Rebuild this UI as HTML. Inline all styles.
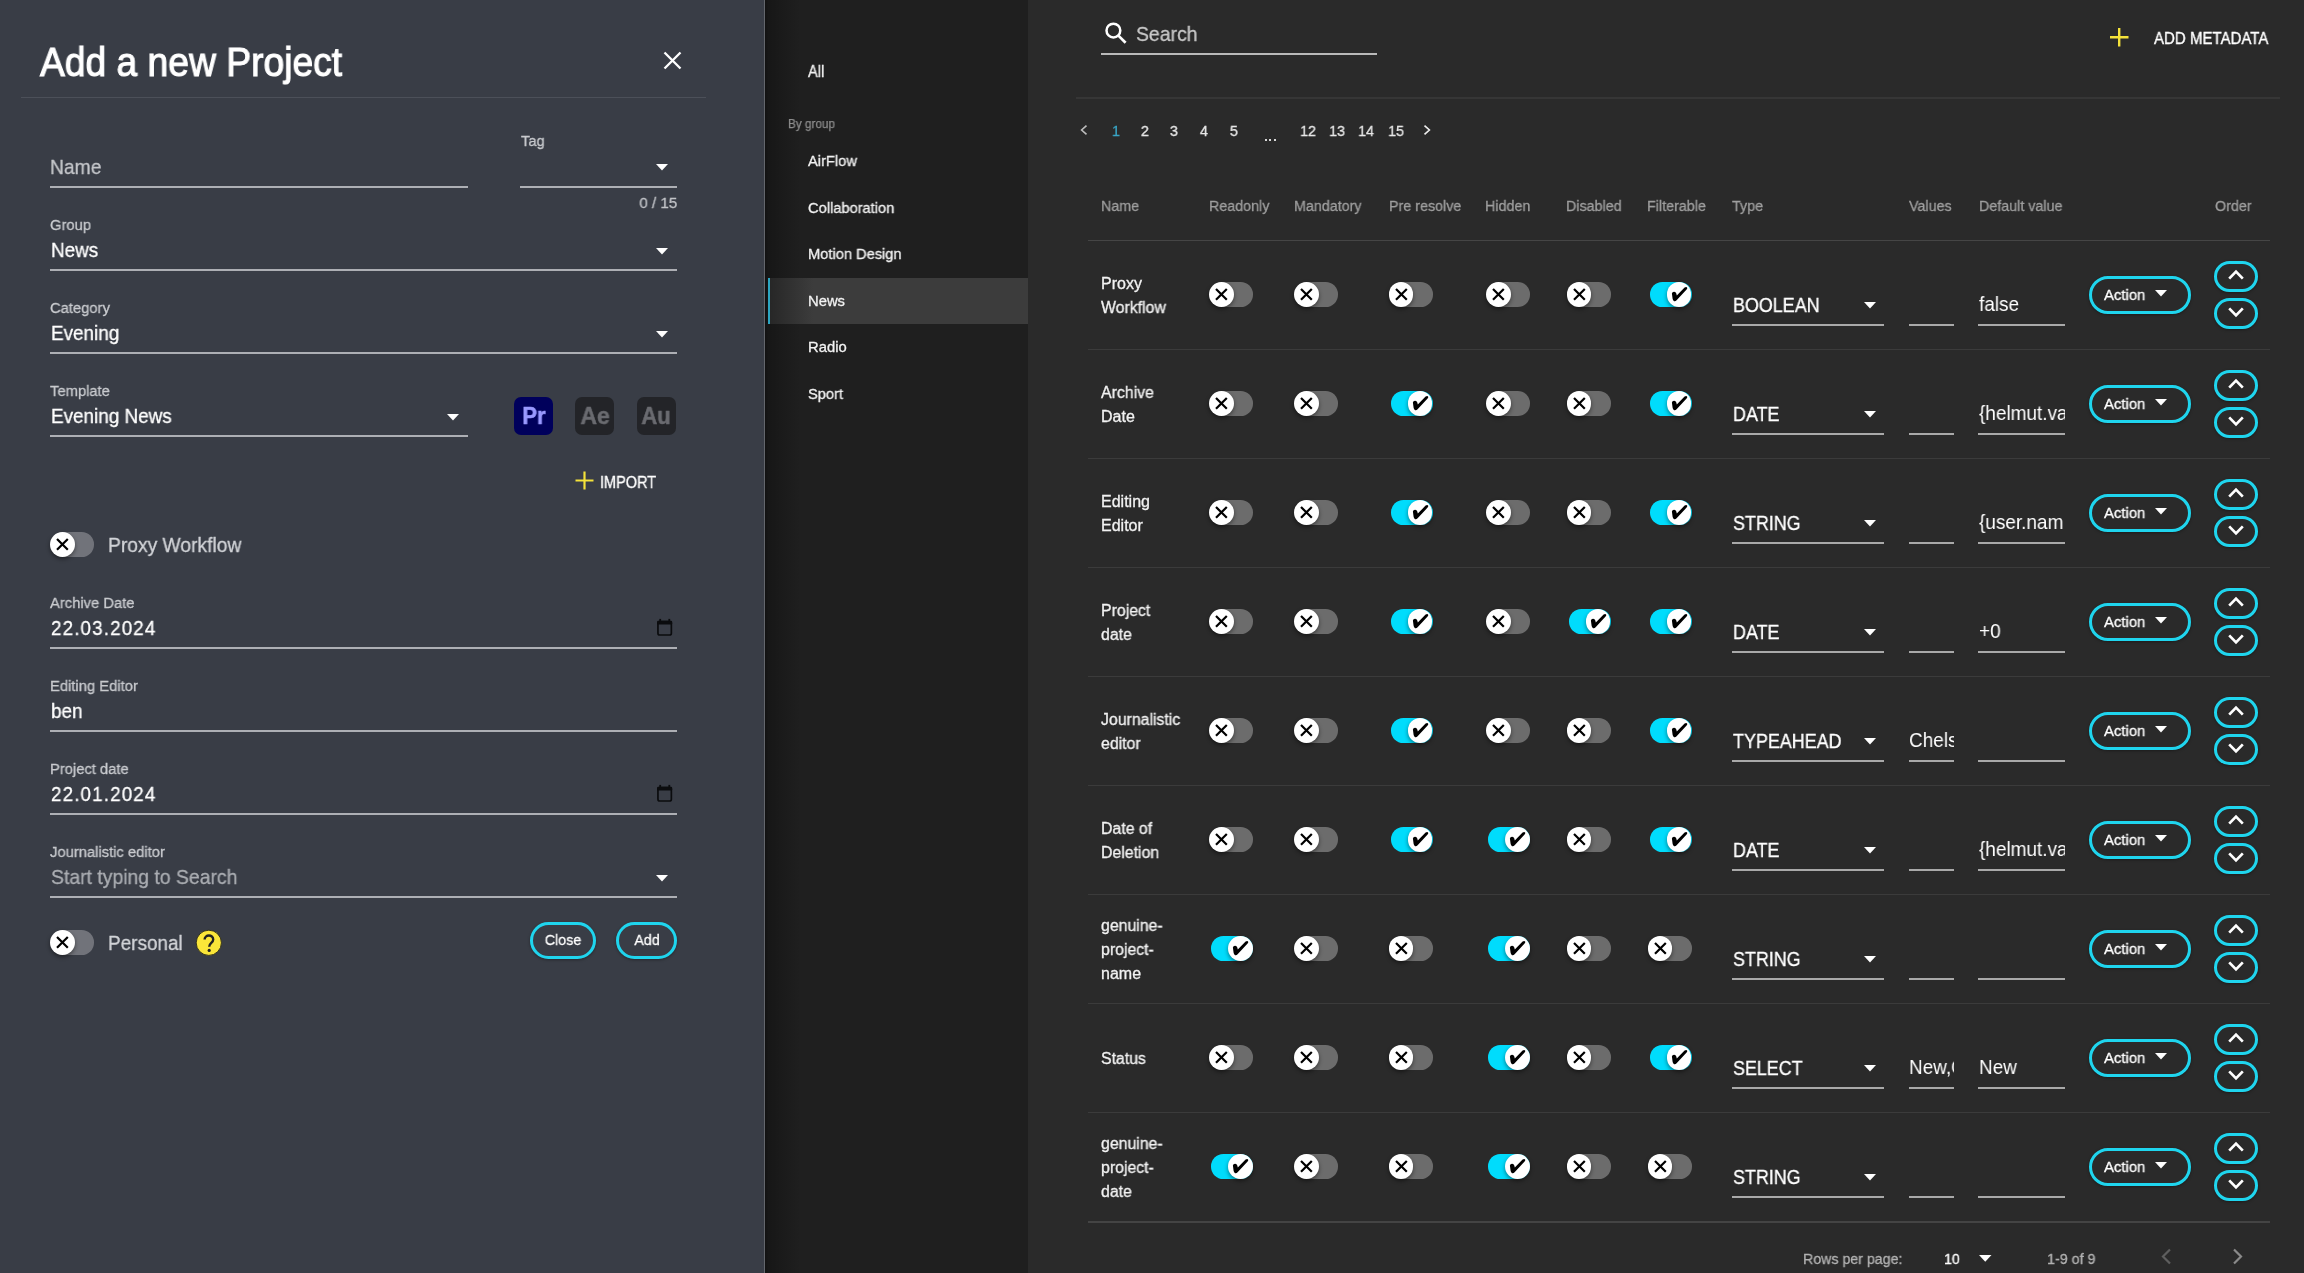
<!DOCTYPE html>
<html><head><meta charset="utf-8"><title>Add a new Project</title>
<style>
html,body{margin:0;padding:0;}
body{width:2304px;height:1273px;overflow:hidden;position:relative;background:#2a2a2a;font-family:"Liberation Sans",sans-serif;}
.t{position:absolute;white-space:nowrap;will-change:transform;}
.r{position:absolute;}
.s{position:absolute;overflow:visible;}
</style></head><body>
<div class="r" style="left:0px;top:0px;width:764px;height:1273px;background:#393d46;"></div>
<div class="r" style="left:764px;top:0px;width:1px;height:1273px;background:#63666c;"></div>
<div class="r" style="left:765px;top:0px;width:263px;height:1273px;background:#1f1f1f;"></div>
<div class="r" style="left:765px;top:0px;width:40px;height:1273px;background:linear-gradient(90deg, rgba(0,0,0,.45) 0px, rgba(0,0,0,.28) 3px, rgba(0,0,0,.14) 18px, rgba(0,0,0,0) 36px);"></div>
<div class="r" style="left:1028px;top:0px;width:1276px;height:1273px;background:#2a2a2a;"></div>
<div class="t" style="left:40.00px;top:37.97px;font-size:40.50px;line-height:48.6px;color:#ffffff;transform:scaleX(0.9189);transform-origin:left center;-webkit-text-stroke:1.1px #fff;">Add a new Project</div>
<svg class="s" style="left:660px;top:48px;" width="25" height="25" viewBox="0 0 25 25"><path d="M4.5 4.5 L20.5 20.5 M20.5 4.5 L4.5 20.5" stroke="#fff" stroke-width="2.3" stroke-linecap="butt"/></svg>
<div class="r" style="left:21px;top:97px;width:685px;height:1px;background:#4c5059;"></div>
<div class="t" style="left:50.30px;top:154.51px;font-size:20.80px;line-height:24.96px;color:#c4c6ca;transform:scaleX(0.9273);transform-origin:left center;-webkit-text-stroke:0.3px #c4c6ca;">Name</div>
<div class="r" style="left:50px;top:186px;width:418px;height:2px;background:#adafb4;"></div>
<div class="t" style="left:520.90px;top:132.89px;font-size:14.80px;line-height:17.76px;color:#c9cbcf;transform:scaleX(0.9862);transform-origin:left center;-webkit-text-stroke:0.3px #c9cbcf;">Tag</div>
<svg class="s" style="left:655px;top:163px;" width="14" height="8.5" viewBox="0 0 14 8.5"><path d="M1 1 L13 1 L7.0 7.5 Z" fill="#fff"/></svg>
<div class="r" style="left:520px;top:186px;width:157px;height:2px;background:#adafb4;"></div>
<div class="t" style="right:1627.00px;top:193.72px;font-size:15.30px;line-height:18.36px;color:#c2c4c8;transform:scaleX(0.9908);transform-origin:right center;-webkit-text-stroke:0.3px #c2c4c8;">0 / 15</div>
<div class="t" style="left:50.30px;top:216.02px;font-size:15.30px;line-height:18.36px;color:#c9cbcf;transform:scaleX(0.965);transform-origin:left center;-webkit-text-stroke:0.3px #c9cbcf;">Group</div>
<div class="t" style="left:51.00px;top:239.06px;font-size:19.80px;line-height:23.76px;color:#ffffff;transform:scaleX(0.955);transform-origin:left center;-webkit-text-stroke:0.3px #ffffff;">News</div>
<svg class="s" style="left:655px;top:246.5px;" width="14" height="8.5" viewBox="0 0 14 8.5"><path d="M1 1 L13 1 L7.0 7.5 Z" fill="#fff"/></svg>
<div class="r" style="left:50px;top:269px;width:627px;height:2px;background:#adafb4;"></div>
<div class="t" style="left:50.30px;top:299.02px;font-size:15.30px;line-height:18.36px;color:#c9cbcf;transform:scaleX(0.965);transform-origin:left center;-webkit-text-stroke:0.3px #c9cbcf;">Category</div>
<div class="t" style="left:51.00px;top:322.06px;font-size:19.80px;line-height:23.76px;color:#ffffff;transform:scaleX(0.955);transform-origin:left center;-webkit-text-stroke:0.3px #ffffff;">Evening</div>
<svg class="s" style="left:655px;top:329.5px;" width="14" height="8.5" viewBox="0 0 14 8.5"><path d="M1 1 L13 1 L7.0 7.5 Z" fill="#fff"/></svg>
<div class="r" style="left:50px;top:352px;width:627px;height:2px;background:#adafb4;"></div>
<div class="t" style="left:50.30px;top:382.02px;font-size:15.30px;line-height:18.36px;color:#c9cbcf;transform:scaleX(0.965);transform-origin:left center;-webkit-text-stroke:0.3px #c9cbcf;">Template</div>
<div class="t" style="left:51.00px;top:405.06px;font-size:19.80px;line-height:23.76px;color:#ffffff;transform:scaleX(0.955);transform-origin:left center;-webkit-text-stroke:0.3px #ffffff;">Evening News</div>
<svg class="s" style="left:446px;top:412.5px;" width="14" height="8.5" viewBox="0 0 14 8.5"><path d="M1 1 L13 1 L7.0 7.5 Z" fill="#fff"/></svg>
<div class="r" style="left:50px;top:435px;width:418px;height:2px;background:#adafb4;"></div>
<div class="r" style="left:514px;top:397px;width:39px;height:38px;border-radius:7px;background:#00005b;"></div>
<div class="t" style="left:333.50px;width:400px;text-align:center;top:401.88px;font-size:24.00px;line-height:28.8px;color:#9999ff;font-weight:700;transform:scaleX(0.9163);transform-origin:center center;-webkit-text-stroke:0.5px #9999ff;">Pr</div>
<div class="r" style="left:575px;top:397px;width:39px;height:38px;border-radius:7px;background:#232428;"></div>
<div class="t" style="left:394.50px;width:400px;text-align:center;top:401.88px;font-size:24.00px;line-height:28.8px;color:#6a6b70;font-weight:700;transform:scaleX(0.957);transform-origin:center center;-webkit-text-stroke:0.5px #6a6b70;">Ae</div>
<div class="r" style="left:636.5px;top:397px;width:39px;height:38px;border-radius:7px;background:#232428;"></div>
<div class="t" style="left:456.00px;width:400px;text-align:center;top:401.88px;font-size:24.00px;line-height:28.8px;color:#6a6b70;font-weight:700;transform:scaleX(0.9176);transform-origin:center center;-webkit-text-stroke:0.5px #6a6b70;">Au</div>
<svg class="s" style="left:575px;top:471px;" width="19" height="19" viewBox="0 0 19 19"><path d="M9.5 0.5 V18.5 M0.5 9.5 H18.5" stroke="#f4e23a" stroke-width="2.2"/></svg>
<div class="t" style="left:600.40px;top:473.49px;font-size:16.60px;line-height:19.92px;color:#ffffff;transform:scaleX(0.8733);transform-origin:left center;-webkit-text-stroke:0.3px #ffffff;">IMPORT</div>
<div class="r" style="left:51px;top:532.3000000000001px;width:43px;height:24.6px;border-radius:12.3px;background:#71737a;"></div>
<div class="r" style="left:50px;top:532.2px;width:24.8px;height:24.8px;border-radius:50%;background:#fff;box-shadow:0 2px 4px rgba(0,0,0,.45);"></div>
<svg class="s" style="left:50px;top:532.2px;" width="25" height="25" viewBox="0 0 25 25"><path d="M7.0 7.0 L17.8 17.8 M17.8 7.0 L7.0 17.8" stroke="#000" stroke-width="2.2"/></svg>
<div class="t" style="left:107.60px;top:532.70px;font-size:20.50px;line-height:24.6px;color:#d2d4d8;transform:scaleX(0.939);transform-origin:left center;-webkit-text-stroke:0.3px #d2d4d8;">Proxy Workflow</div>
<div class="t" style="left:50.30px;top:594.02px;font-size:15.30px;line-height:18.36px;color:#c9cbcf;transform:scaleX(0.965);transform-origin:left center;-webkit-text-stroke:0.3px #c9cbcf;">Archive Date</div>
<div class="t" style="left:51.00px;top:617.06px;font-size:19.80px;line-height:23.76px;color:#ffffff;letter-spacing:1.2px;transform:scaleX(0.95);transform-origin:left center;-webkit-text-stroke:0.3px #ffffff;">22.03.2024</div>
<svg class="s" style="left:656px;top:618px;" width="18" height="19" viewBox="0 0 18 19"><rect x="1.95" y="3.5" width="13.4" height="13.5" rx="1.8" fill="none" stroke="#0b0c0e" stroke-width="1.7"/><rect x="1.1" y="2.7" width="15.1" height="3.8" rx="1.2" fill="#0b0c0e"/><rect x="3.3" y="0.9" width="1.8" height="2.6" fill="#0b0c0e"/><rect x="12.4" y="0.9" width="1.8" height="2.6" fill="#0b0c0e"/></svg>
<div class="r" style="left:50px;top:647px;width:627px;height:2px;background:#adafb4;"></div>
<div class="t" style="left:50.30px;top:677.02px;font-size:15.30px;line-height:18.36px;color:#c9cbcf;transform:scaleX(0.965);transform-origin:left center;-webkit-text-stroke:0.3px #c9cbcf;">Editing Editor</div>
<div class="t" style="left:51.00px;top:700.06px;font-size:19.80px;line-height:23.76px;color:#ffffff;transform:scaleX(0.955);transform-origin:left center;-webkit-text-stroke:0.3px #ffffff;">ben</div>
<div class="r" style="left:50px;top:730px;width:627px;height:2px;background:#adafb4;"></div>
<div class="t" style="left:50.30px;top:760.02px;font-size:15.30px;line-height:18.36px;color:#c9cbcf;transform:scaleX(0.965);transform-origin:left center;-webkit-text-stroke:0.3px #c9cbcf;">Project date</div>
<div class="t" style="left:51.00px;top:783.06px;font-size:19.80px;line-height:23.76px;color:#ffffff;letter-spacing:1.2px;transform:scaleX(0.95);transform-origin:left center;-webkit-text-stroke:0.3px #ffffff;">22.01.2024</div>
<svg class="s" style="left:656px;top:784px;" width="18" height="19" viewBox="0 0 18 19"><rect x="1.95" y="3.5" width="13.4" height="13.5" rx="1.8" fill="none" stroke="#0b0c0e" stroke-width="1.7"/><rect x="1.1" y="2.7" width="15.1" height="3.8" rx="1.2" fill="#0b0c0e"/><rect x="3.3" y="0.9" width="1.8" height="2.6" fill="#0b0c0e"/><rect x="12.4" y="0.9" width="1.8" height="2.6" fill="#0b0c0e"/></svg>
<div class="r" style="left:50px;top:813px;width:627px;height:2px;background:#adafb4;"></div>
<div class="t" style="left:50.30px;top:843.02px;font-size:15.30px;line-height:18.36px;color:#c9cbcf;transform:scaleX(0.965);transform-origin:left center;-webkit-text-stroke:0.3px #c9cbcf;">Journalistic editor</div>
<div class="t" style="left:51.00px;top:866.06px;font-size:19.80px;line-height:23.76px;color:#abaeb3;transform:scaleX(0.98);transform-origin:left center;-webkit-text-stroke:0.3px #abaeb3;">Start typing to Search</div>
<svg class="s" style="left:655px;top:873.5px;" width="14" height="8.5" viewBox="0 0 14 8.5"><path d="M1 1 L13 1 L7.0 7.5 Z" fill="#fff"/></svg>
<div class="r" style="left:50px;top:896px;width:627px;height:2px;background:#adafb4;"></div>
<div class="r" style="left:51px;top:930.2px;width:43px;height:24.6px;border-radius:12.3px;background:#71737a;"></div>
<div class="r" style="left:50px;top:930.1px;width:24.8px;height:24.8px;border-radius:50%;background:#fff;box-shadow:0 2px 4px rgba(0,0,0,.45);"></div>
<svg class="s" style="left:50px;top:930.1px;" width="25" height="25" viewBox="0 0 25 25"><path d="M7.0 7.0 L17.8 17.8 M17.8 7.0 L7.0 17.8" stroke="#000" stroke-width="2.2"/></svg>
<div class="t" style="left:107.70px;top:930.90px;font-size:20.50px;line-height:24.6px;color:#d2d4d8;transform:scaleX(0.9237);transform-origin:left center;-webkit-text-stroke:0.3px #d2d4d8;">Personal</div>
<svg class="s" style="left:195px;top:928.5px;" width="28" height="28" viewBox="0 0 28 28"><circle cx="13.8" cy="13.8" r="12.6" fill="#fbe639" stroke="#2a2a1a" stroke-width="0.9"/><path d="M9.6 10.6 C9.6 5.2 18.2 5.2 18.2 10.4 C18.2 14.0 14.2 13.8 14.2 17.8" fill="none" stroke="#222" stroke-width="2.4"/><circle cx="14.2" cy="21.4" r="1.6" fill="#222"/></svg>
<div class="r" style="left:530px;top:921.5px;width:66px;height:37.5px;border-radius:18.75px;border:3px solid #1fd5ee;box-sizing:border-box;box-shadow:0 1px 3px rgba(0,0,0,.35);"></div>
<div class="t" style="left:363.00px;width:400px;text-align:center;top:931.03px;font-size:15.50px;line-height:18.6px;color:#ffffff;transform:scaleX(0.92);transform-origin:center center;-webkit-text-stroke:0.3px #ffffff;">Close</div>
<div class="r" style="left:616px;top:921.5px;width:61px;height:37.5px;border-radius:18.75px;border:3px solid #1fd5ee;box-sizing:border-box;box-shadow:0 1px 3px rgba(0,0,0,.35);"></div>
<div class="t" style="left:446.50px;width:400px;text-align:center;top:931.03px;font-size:15.50px;line-height:18.6px;color:#ffffff;transform:scaleX(0.92);transform-origin:center center;-webkit-text-stroke:0.3px #ffffff;">Add</div>
<div class="t" style="left:808.10px;top:63.04px;font-size:15.70px;line-height:18.84px;color:#f0f0f0;transform:scaleX(0.9353);transform-origin:left center;-webkit-text-stroke:0.3px #f0f0f0;">All</div>
<div class="t" style="left:787.70px;top:116.97px;font-size:12.60px;line-height:15.12px;color:#8e8e8e;transform:scaleX(0.9294);transform-origin:left center;-webkit-text-stroke:0.25px #8e8e8e;">By group</div>
<div class="t" style="left:808.10px;top:153.19px;font-size:14.80px;line-height:17.76px;color:#f2f2f2;transform:scaleX(0.99);transform-origin:left center;-webkit-text-stroke:0.3px #f2f2f2;">AirFlow</div>
<div class="t" style="left:808.10px;top:199.69px;font-size:14.80px;line-height:17.76px;color:#f2f2f2;transform:scaleX(0.99);transform-origin:left center;-webkit-text-stroke:0.3px #f2f2f2;">Collaboration</div>
<div class="t" style="left:808.10px;top:246.19px;font-size:14.80px;line-height:17.76px;color:#f2f2f2;transform:scaleX(0.99);transform-origin:left center;-webkit-text-stroke:0.3px #f2f2f2;">Motion Design</div>
<div class="r" style="left:768px;top:278px;width:260px;height:46px;background:linear-gradient(90deg,#262626 0px,#3c3c3c 45px,#3c3c3c 100%);"></div>
<div class="r" style="left:767.8px;top:278px;width:2.6px;height:46px;background:#2ca6c2;"></div>
<div class="t" style="left:808.10px;top:292.69px;font-size:14.80px;line-height:17.76px;color:#f2f2f2;transform:scaleX(0.99);transform-origin:left center;-webkit-text-stroke:0.3px #f2f2f2;">News</div>
<div class="t" style="left:808.10px;top:339.19px;font-size:14.80px;line-height:17.76px;color:#f2f2f2;transform:scaleX(0.99);transform-origin:left center;-webkit-text-stroke:0.3px #f2f2f2;">Radio</div>
<div class="t" style="left:808.10px;top:385.69px;font-size:14.80px;line-height:17.76px;color:#f2f2f2;transform:scaleX(0.99);transform-origin:left center;-webkit-text-stroke:0.3px #f2f2f2;">Sport</div>
<svg class="s" style="left:1103px;top:20px;" width="26" height="26" viewBox="0 0 26 26"><circle cx="10.4" cy="10.6" r="6.9" fill="none" stroke="#fff" stroke-width="2.5"/><path d="M15.4 15.6 L22.6 22.8" stroke="#fff" stroke-width="2.7"/></svg>
<div class="t" style="left:1135.80px;top:21.71px;font-size:20.80px;line-height:24.96px;color:#c8c8c8;transform:scaleX(0.9342);transform-origin:left center;-webkit-text-stroke:0.3px #c8c8c8;">Search</div>
<div class="r" style="left:1101px;top:53px;width:276px;height:2px;background:#b9b9b9;"></div>
<svg class="s" style="left:2109px;top:27px;" width="21" height="21" viewBox="0 0 21 21"><path d="M10.2 1 V19.5 M1 10.2 H19.5" stroke="#f4e23a" stroke-width="2.4"/></svg>
<div class="t" style="left:2154.00px;top:28.99px;font-size:16.60px;line-height:19.92px;color:#ffffff;transform:scaleX(0.9058);transform-origin:left center;-webkit-text-stroke:0.35px #fff;">ADD METADATA</div>
<div class="r" style="left:1076px;top:97px;width:1204px;height:1.8px;background:#363636;"></div>
<svg class="s" style="left:1077px;top:123px;" width="14" height="14" viewBox="0 0 14 14"><path d="M9.5 2.6 L4.6 7 L9.5 11.4" fill="none" stroke="#bdbdbd" stroke-width="1.6"/></svg>
<div class="t" style="left:915.60px;width:400px;text-align:center;top:121.60px;font-size:15.00px;line-height:18.0px;color:#3aa6c6;transform:scaleX(0.95);transform-origin:center center;-webkit-text-stroke:0.3px #3aa6c6;">1</div>
<div class="t" style="left:945.00px;width:400px;text-align:center;top:121.60px;font-size:15.00px;line-height:18.0px;color:#e8e8e8;transform:scaleX(0.95);transform-origin:center center;-webkit-text-stroke:0.3px #e8e8e8;">2</div>
<div class="t" style="left:974.20px;width:400px;text-align:center;top:121.60px;font-size:15.00px;line-height:18.0px;color:#e8e8e8;transform:scaleX(0.95);transform-origin:center center;-webkit-text-stroke:0.3px #e8e8e8;">3</div>
<div class="t" style="left:1004.00px;width:400px;text-align:center;top:121.60px;font-size:15.00px;line-height:18.0px;color:#e8e8e8;transform:scaleX(0.95);transform-origin:center center;-webkit-text-stroke:0.3px #e8e8e8;">4</div>
<div class="t" style="left:1033.60px;width:400px;text-align:center;top:121.60px;font-size:15.00px;line-height:18.0px;color:#e8e8e8;transform:scaleX(0.95);transform-origin:center center;-webkit-text-stroke:0.3px #e8e8e8;">5</div>
<div class="t" style="left:1107.50px;width:400px;text-align:center;top:121.60px;font-size:15.00px;line-height:18.0px;color:#e8e8e8;transform:scaleX(0.95);transform-origin:center center;-webkit-text-stroke:0.3px #e8e8e8;">12</div>
<div class="t" style="left:1136.90px;width:400px;text-align:center;top:121.60px;font-size:15.00px;line-height:18.0px;color:#e8e8e8;transform:scaleX(0.95);transform-origin:center center;-webkit-text-stroke:0.3px #e8e8e8;">13</div>
<div class="t" style="left:1166.40px;width:400px;text-align:center;top:121.60px;font-size:15.00px;line-height:18.0px;color:#e8e8e8;transform:scaleX(0.95);transform-origin:center center;-webkit-text-stroke:0.3px #e8e8e8;">14</div>
<div class="t" style="left:1195.70px;width:400px;text-align:center;top:121.60px;font-size:15.00px;line-height:18.0px;color:#e8e8e8;transform:scaleX(0.95);transform-origin:center center;-webkit-text-stroke:0.3px #e8e8e8;">15</div>
<div class="r" style="left:1265.3px;top:139.2px;width:2px;height:2px;background:#d8d8d8;"></div>
<div class="r" style="left:1269.3999999999999px;top:139.2px;width:2px;height:2px;background:#d8d8d8;"></div>
<div class="r" style="left:1273.5px;top:139.2px;width:2px;height:2px;background:#d8d8d8;"></div>
<svg class="s" style="left:1420px;top:123px;" width="14" height="14" viewBox="0 0 14 14"><path d="M4.5 2.6 L9.4 7 L4.5 11.4" fill="none" stroke="#eeeeee" stroke-width="1.6"/></svg>
<div class="t" style="left:1100.50px;top:196.92px;font-size:15.30px;line-height:18.36px;color:#9f9f9f;transform:scaleX(0.935);transform-origin:left center;-webkit-text-stroke:0.3px #9f9f9f;">Name</div>
<div class="t" style="left:1209.40px;top:196.92px;font-size:15.30px;line-height:18.36px;color:#9f9f9f;transform:scaleX(0.935);transform-origin:left center;-webkit-text-stroke:0.3px #9f9f9f;">Readonly</div>
<div class="t" style="left:1293.90px;top:196.92px;font-size:15.30px;line-height:18.36px;color:#9f9f9f;transform:scaleX(0.935);transform-origin:left center;-webkit-text-stroke:0.3px #9f9f9f;">Mandatory</div>
<div class="t" style="left:1389.00px;top:196.92px;font-size:15.30px;line-height:18.36px;color:#9f9f9f;transform:scaleX(0.935);transform-origin:left center;-webkit-text-stroke:0.3px #9f9f9f;">Pre resolve</div>
<div class="t" style="left:1485.30px;top:196.92px;font-size:15.30px;line-height:18.36px;color:#9f9f9f;transform:scaleX(0.935);transform-origin:left center;-webkit-text-stroke:0.3px #9f9f9f;">Hidden</div>
<div class="t" style="left:1566.20px;top:196.92px;font-size:15.30px;line-height:18.36px;color:#9f9f9f;transform:scaleX(0.935);transform-origin:left center;-webkit-text-stroke:0.3px #9f9f9f;">Disabled</div>
<div class="t" style="left:1647.30px;top:196.92px;font-size:15.30px;line-height:18.36px;color:#9f9f9f;transform:scaleX(0.935);transform-origin:left center;-webkit-text-stroke:0.3px #9f9f9f;">Filterable</div>
<div class="t" style="left:1732.00px;top:196.92px;font-size:15.30px;line-height:18.36px;color:#9f9f9f;transform:scaleX(0.935);transform-origin:left center;-webkit-text-stroke:0.3px #9f9f9f;">Type</div>
<div class="t" style="left:1908.50px;top:196.92px;font-size:15.30px;line-height:18.36px;color:#9f9f9f;transform:scaleX(0.935);transform-origin:left center;-webkit-text-stroke:0.3px #9f9f9f;">Values</div>
<div class="t" style="left:1979.00px;top:196.92px;font-size:15.30px;line-height:18.36px;color:#9f9f9f;transform:scaleX(0.935);transform-origin:left center;-webkit-text-stroke:0.3px #9f9f9f;">Default value</div>
<div class="t" style="left:2215.00px;top:196.92px;font-size:15.30px;line-height:18.36px;color:#9f9f9f;transform:scaleX(0.935);transform-origin:left center;-webkit-text-stroke:0.3px #9f9f9f;">Order</div>
<div class="r" style="left:1088px;top:240px;width:1182px;height:1.4px;background:#454545;"></div>
<div class="r" style="left:1088px;top:349.2px;width:1182px;height:1.3px;background:#3b3b3b;"></div>
<div class="r" style="left:1088px;top:458.2px;width:1182px;height:1.3px;background:#3b3b3b;"></div>
<div class="r" style="left:1088px;top:567.2px;width:1182px;height:1.3px;background:#3b3b3b;"></div>
<div class="r" style="left:1088px;top:676.2px;width:1182px;height:1.3px;background:#3b3b3b;"></div>
<div class="r" style="left:1088px;top:785.2px;width:1182px;height:1.3px;background:#3b3b3b;"></div>
<div class="r" style="left:1088px;top:894.2px;width:1182px;height:1.3px;background:#3b3b3b;"></div>
<div class="r" style="left:1088px;top:1003.2px;width:1182px;height:1.3px;background:#3b3b3b;"></div>
<div class="r" style="left:1088px;top:1112.2px;width:1182px;height:1.3px;background:#3b3b3b;"></div>
<div class="r" style="left:1088px;top:1220.8px;width:1182px;height:2px;background:#444444;"></div>
<div class="t" style="left:1101.30px;top:274.16px;font-size:16.00px;line-height:19.2px;color:#f2f2f2;transform:scaleX(0.99);transform-origin:left center;-webkit-text-stroke:0.3px #f2f2f2;">Proxy</div>
<div class="t" style="left:1101.30px;top:298.16px;font-size:16.00px;line-height:19.2px;color:#f2f2f2;transform:scaleX(0.99);transform-origin:left center;-webkit-text-stroke:0.3px #f2f2f2;">Workflow</div>
<div class="r" style="left:1210px;top:282.2px;width:43px;height:24.6px;border-radius:12.3px;background:#6c6c6c;"></div>
<div class="r" style="left:1209px;top:282.1px;width:24.8px;height:24.8px;border-radius:50%;background:#fff;box-shadow:0 2px 4px rgba(0,0,0,.45);"></div>
<svg class="s" style="left:1209px;top:282.1px;" width="25" height="25" viewBox="0 0 25 25"><path d="M7.0 7.0 L17.8 17.8 M17.8 7.0 L7.0 17.8" stroke="#000" stroke-width="2.2"/></svg>
<div class="r" style="left:1295px;top:282.2px;width:43px;height:24.6px;border-radius:12.3px;background:#6c6c6c;"></div>
<div class="r" style="left:1294px;top:282.1px;width:24.8px;height:24.8px;border-radius:50%;background:#fff;box-shadow:0 2px 4px rgba(0,0,0,.45);"></div>
<svg class="s" style="left:1294px;top:282.1px;" width="25" height="25" viewBox="0 0 25 25"><path d="M7.0 7.0 L17.8 17.8 M17.8 7.0 L7.0 17.8" stroke="#000" stroke-width="2.2"/></svg>
<div class="r" style="left:1389.5px;top:282.2px;width:43px;height:24.6px;border-radius:12.3px;background:#6c6c6c;"></div>
<div class="r" style="left:1388.5px;top:282.1px;width:24.8px;height:24.8px;border-radius:50%;background:#fff;box-shadow:0 2px 4px rgba(0,0,0,.45);"></div>
<svg class="s" style="left:1388.5px;top:282.1px;" width="25" height="25" viewBox="0 0 25 25"><path d="M7.0 7.0 L17.8 17.8 M17.8 7.0 L7.0 17.8" stroke="#000" stroke-width="2.2"/></svg>
<div class="r" style="left:1487px;top:282.2px;width:43px;height:24.6px;border-radius:12.3px;background:#6c6c6c;"></div>
<div class="r" style="left:1486px;top:282.1px;width:24.8px;height:24.8px;border-radius:50%;background:#fff;box-shadow:0 2px 4px rgba(0,0,0,.45);"></div>
<svg class="s" style="left:1486px;top:282.1px;" width="25" height="25" viewBox="0 0 25 25"><path d="M7.0 7.0 L17.8 17.8 M17.8 7.0 L7.0 17.8" stroke="#000" stroke-width="2.2"/></svg>
<div class="r" style="left:1567.5px;top:282.2px;width:43px;height:24.6px;border-radius:12.3px;background:#6c6c6c;"></div>
<div class="r" style="left:1566.5px;top:282.1px;width:24.8px;height:24.8px;border-radius:50%;background:#fff;box-shadow:0 2px 4px rgba(0,0,0,.45);"></div>
<svg class="s" style="left:1566.5px;top:282.1px;" width="25" height="25" viewBox="0 0 25 25"><path d="M7.0 7.0 L17.8 17.8 M17.8 7.0 L7.0 17.8" stroke="#000" stroke-width="2.2"/></svg>
<div class="r" style="left:1649.5px;top:282.2px;width:42px;height:24.6px;border-radius:12.3px;background:#00dcfc;"></div>
<div class="r" style="left:1666.7px;top:282.1px;width:24.8px;height:24.8px;border-radius:50%;background:#fff;box-shadow:0 2px 4px rgba(0,0,0,.45);"></div>
<svg class="s" style="left:1666.7px;top:282.1px;" width="25" height="25" viewBox="0 0 25 25"><path d="M4.9 11.4 Q5.2 9.6 7.2 9.7 Q8.8 9.9 9.3 11.6 L9.8 13.6 L17.6 5.6 Q19.2 4.3 20.1 5.4 Q20.6 6.4 19.6 7.6 L9.6 18.3 Q8.2 19.6 6.8 18.9 Q5.9 18.3 5.6 16.8 Z" fill="#000"/></svg>
<div class="t" style="left:1732.50px;top:292.89px;font-size:20.30px;line-height:24.36px;color:#ffffff;transform:scaleX(0.883);transform-origin:left center;-webkit-text-stroke:0.3px #ffffff;">BOOLEAN</div>
<svg class="s" style="left:1862.5px;top:300.8px;" width="14" height="8.5" viewBox="0 0 14 8.5"><path d="M1 1 L13 1 L7.0 7.5 Z" fill="#fff"/></svg>
<div class="r" style="left:1732px;top:324.0px;width:152px;height:2px;background:#a9a9a9;"></div>
<div class="r" style="left:1908.5px;top:324.0px;width:45.5px;height:2px;background:#a9a9a9;"></div>
<div class="r" style="left:1978px;top:289.5px;width:87px;height:30px;overflow:hidden;"><div class="t" style="left:1px;top:2.49px;font-size:20.4px;line-height:24.48px;color:#fff;transform:scaleX(0.93);transform-origin:left center;">false</div></div>
<div class="r" style="left:1978px;top:324.0px;width:87px;height:2px;background:#a9a9a9;"></div>
<div class="r" style="left:2089px;top:275.5px;width:101.5px;height:38px;border-radius:19.0px;border:3px solid #1fd5ee;box-sizing:border-box;box-shadow:0 1px 3px rgba(0,0,0,.35);"></div>
<div class="t" style="left:2104.10px;top:286.21px;font-size:15.10px;line-height:18.12px;color:#ffffff;transform:scaleX(0.9862);transform-origin:left center;-webkit-text-stroke:0.3px #ffffff;">Action</div>
<svg class="s" style="left:2154px;top:288.7px;" width="14" height="8.5" viewBox="0 0 14 8.5"><path d="M1 1 L13 1 L7.0 7.5 Z" fill="#fff"/></svg>
<div class="r" style="left:2214px;top:261.0px;width:43.6px;height:31px;border-radius:15.5px;border:3px solid #1fd5ee;box-sizing:border-box;box-shadow:0 1px 3px rgba(0,0,0,.35);"></div>
<div class="r" style="left:2214px;top:298.0px;width:43.6px;height:31px;border-radius:15.5px;border:3px solid #1fd5ee;box-sizing:border-box;box-shadow:0 1px 3px rgba(0,0,0,.35);"></div>
<svg class="s" style="left:2228px;top:268.5px;" width="16" height="11" viewBox="0 0 16 11"><path d="M1.2 9.6 L8 2.6 L14.8 9.6" fill="none" stroke="#fff" stroke-width="2.7"/></svg>
<svg class="s" style="left:2228px;top:307.0px;" width="16" height="11" viewBox="0 0 16 11"><path d="M1.2 1.4 L8 8.4 L14.8 1.4" fill="none" stroke="#fff" stroke-width="2.7"/></svg>
<div class="t" style="left:1101.30px;top:383.16px;font-size:16.00px;line-height:19.2px;color:#f2f2f2;transform:scaleX(0.99);transform-origin:left center;-webkit-text-stroke:0.3px #f2f2f2;">Archive</div>
<div class="t" style="left:1101.30px;top:407.16px;font-size:16.00px;line-height:19.2px;color:#f2f2f2;transform:scaleX(0.99);transform-origin:left center;-webkit-text-stroke:0.3px #f2f2f2;">Date</div>
<div class="r" style="left:1210px;top:391.2px;width:43px;height:24.6px;border-radius:12.3px;background:#6c6c6c;"></div>
<div class="r" style="left:1209px;top:391.1px;width:24.8px;height:24.8px;border-radius:50%;background:#fff;box-shadow:0 2px 4px rgba(0,0,0,.45);"></div>
<svg class="s" style="left:1209px;top:391.1px;" width="25" height="25" viewBox="0 0 25 25"><path d="M7.0 7.0 L17.8 17.8 M17.8 7.0 L7.0 17.8" stroke="#000" stroke-width="2.2"/></svg>
<div class="r" style="left:1295px;top:391.2px;width:43px;height:24.6px;border-radius:12.3px;background:#6c6c6c;"></div>
<div class="r" style="left:1294px;top:391.1px;width:24.8px;height:24.8px;border-radius:50%;background:#fff;box-shadow:0 2px 4px rgba(0,0,0,.45);"></div>
<svg class="s" style="left:1294px;top:391.1px;" width="25" height="25" viewBox="0 0 25 25"><path d="M7.0 7.0 L17.8 17.8 M17.8 7.0 L7.0 17.8" stroke="#000" stroke-width="2.2"/></svg>
<div class="r" style="left:1390.5px;top:391.2px;width:42px;height:24.6px;border-radius:12.3px;background:#00dcfc;"></div>
<div class="r" style="left:1407.7px;top:391.1px;width:24.8px;height:24.8px;border-radius:50%;background:#fff;box-shadow:0 2px 4px rgba(0,0,0,.45);"></div>
<svg class="s" style="left:1407.7px;top:391.1px;" width="25" height="25" viewBox="0 0 25 25"><path d="M4.9 11.4 Q5.2 9.6 7.2 9.7 Q8.8 9.9 9.3 11.6 L9.8 13.6 L17.6 5.6 Q19.2 4.3 20.1 5.4 Q20.6 6.4 19.6 7.6 L9.6 18.3 Q8.2 19.6 6.8 18.9 Q5.9 18.3 5.6 16.8 Z" fill="#000"/></svg>
<div class="r" style="left:1487px;top:391.2px;width:43px;height:24.6px;border-radius:12.3px;background:#6c6c6c;"></div>
<div class="r" style="left:1486px;top:391.1px;width:24.8px;height:24.8px;border-radius:50%;background:#fff;box-shadow:0 2px 4px rgba(0,0,0,.45);"></div>
<svg class="s" style="left:1486px;top:391.1px;" width="25" height="25" viewBox="0 0 25 25"><path d="M7.0 7.0 L17.8 17.8 M17.8 7.0 L7.0 17.8" stroke="#000" stroke-width="2.2"/></svg>
<div class="r" style="left:1567.5px;top:391.2px;width:43px;height:24.6px;border-radius:12.3px;background:#6c6c6c;"></div>
<div class="r" style="left:1566.5px;top:391.1px;width:24.8px;height:24.8px;border-radius:50%;background:#fff;box-shadow:0 2px 4px rgba(0,0,0,.45);"></div>
<svg class="s" style="left:1566.5px;top:391.1px;" width="25" height="25" viewBox="0 0 25 25"><path d="M7.0 7.0 L17.8 17.8 M17.8 7.0 L7.0 17.8" stroke="#000" stroke-width="2.2"/></svg>
<div class="r" style="left:1649.5px;top:391.2px;width:42px;height:24.6px;border-radius:12.3px;background:#00dcfc;"></div>
<div class="r" style="left:1666.7px;top:391.1px;width:24.8px;height:24.8px;border-radius:50%;background:#fff;box-shadow:0 2px 4px rgba(0,0,0,.45);"></div>
<svg class="s" style="left:1666.7px;top:391.1px;" width="25" height="25" viewBox="0 0 25 25"><path d="M4.9 11.4 Q5.2 9.6 7.2 9.7 Q8.8 9.9 9.3 11.6 L9.8 13.6 L17.6 5.6 Q19.2 4.3 20.1 5.4 Q20.6 6.4 19.6 7.6 L9.6 18.3 Q8.2 19.6 6.8 18.9 Q5.9 18.3 5.6 16.8 Z" fill="#000"/></svg>
<div class="t" style="left:1732.50px;top:401.89px;font-size:20.30px;line-height:24.36px;color:#ffffff;transform:scaleX(0.883);transform-origin:left center;-webkit-text-stroke:0.3px #ffffff;">DATE</div>
<svg class="s" style="left:1862.5px;top:409.8px;" width="14" height="8.5" viewBox="0 0 14 8.5"><path d="M1 1 L13 1 L7.0 7.5 Z" fill="#fff"/></svg>
<div class="r" style="left:1732px;top:433.0px;width:152px;height:2px;background:#a9a9a9;"></div>
<div class="r" style="left:1908.5px;top:433.0px;width:45.5px;height:2px;background:#a9a9a9;"></div>
<div class="r" style="left:1978px;top:398.5px;width:87px;height:30px;overflow:hidden;"><div class="t" style="left:1px;top:2.49px;font-size:20.4px;line-height:24.48px;color:#fff;transform:scaleX(0.93);transform-origin:left center;">{helmut.va</div></div>
<div class="r" style="left:1978px;top:433.0px;width:87px;height:2px;background:#a9a9a9;"></div>
<div class="r" style="left:2089px;top:384.5px;width:101.5px;height:38px;border-radius:19.0px;border:3px solid #1fd5ee;box-sizing:border-box;box-shadow:0 1px 3px rgba(0,0,0,.35);"></div>
<div class="t" style="left:2104.10px;top:395.21px;font-size:15.10px;line-height:18.12px;color:#ffffff;transform:scaleX(0.9862);transform-origin:left center;-webkit-text-stroke:0.3px #ffffff;">Action</div>
<svg class="s" style="left:2154px;top:397.7px;" width="14" height="8.5" viewBox="0 0 14 8.5"><path d="M1 1 L13 1 L7.0 7.5 Z" fill="#fff"/></svg>
<div class="r" style="left:2214px;top:370.0px;width:43.6px;height:31px;border-radius:15.5px;border:3px solid #1fd5ee;box-sizing:border-box;box-shadow:0 1px 3px rgba(0,0,0,.35);"></div>
<div class="r" style="left:2214px;top:407.0px;width:43.6px;height:31px;border-radius:15.5px;border:3px solid #1fd5ee;box-sizing:border-box;box-shadow:0 1px 3px rgba(0,0,0,.35);"></div>
<svg class="s" style="left:2228px;top:377.5px;" width="16" height="11" viewBox="0 0 16 11"><path d="M1.2 9.6 L8 2.6 L14.8 9.6" fill="none" stroke="#fff" stroke-width="2.7"/></svg>
<svg class="s" style="left:2228px;top:416.0px;" width="16" height="11" viewBox="0 0 16 11"><path d="M1.2 1.4 L8 8.4 L14.8 1.4" fill="none" stroke="#fff" stroke-width="2.7"/></svg>
<div class="t" style="left:1101.30px;top:492.16px;font-size:16.00px;line-height:19.2px;color:#f2f2f2;transform:scaleX(0.99);transform-origin:left center;-webkit-text-stroke:0.3px #f2f2f2;">Editing</div>
<div class="t" style="left:1101.30px;top:516.16px;font-size:16.00px;line-height:19.2px;color:#f2f2f2;transform:scaleX(0.99);transform-origin:left center;-webkit-text-stroke:0.3px #f2f2f2;">Editor</div>
<div class="r" style="left:1210px;top:500.2px;width:43px;height:24.6px;border-radius:12.3px;background:#6c6c6c;"></div>
<div class="r" style="left:1209px;top:500.1px;width:24.8px;height:24.8px;border-radius:50%;background:#fff;box-shadow:0 2px 4px rgba(0,0,0,.45);"></div>
<svg class="s" style="left:1209px;top:500.1px;" width="25" height="25" viewBox="0 0 25 25"><path d="M7.0 7.0 L17.8 17.8 M17.8 7.0 L7.0 17.8" stroke="#000" stroke-width="2.2"/></svg>
<div class="r" style="left:1295px;top:500.2px;width:43px;height:24.6px;border-radius:12.3px;background:#6c6c6c;"></div>
<div class="r" style="left:1294px;top:500.1px;width:24.8px;height:24.8px;border-radius:50%;background:#fff;box-shadow:0 2px 4px rgba(0,0,0,.45);"></div>
<svg class="s" style="left:1294px;top:500.1px;" width="25" height="25" viewBox="0 0 25 25"><path d="M7.0 7.0 L17.8 17.8 M17.8 7.0 L7.0 17.8" stroke="#000" stroke-width="2.2"/></svg>
<div class="r" style="left:1390.5px;top:500.2px;width:42px;height:24.6px;border-radius:12.3px;background:#00dcfc;"></div>
<div class="r" style="left:1407.7px;top:500.1px;width:24.8px;height:24.8px;border-radius:50%;background:#fff;box-shadow:0 2px 4px rgba(0,0,0,.45);"></div>
<svg class="s" style="left:1407.7px;top:500.1px;" width="25" height="25" viewBox="0 0 25 25"><path d="M4.9 11.4 Q5.2 9.6 7.2 9.7 Q8.8 9.9 9.3 11.6 L9.8 13.6 L17.6 5.6 Q19.2 4.3 20.1 5.4 Q20.6 6.4 19.6 7.6 L9.6 18.3 Q8.2 19.6 6.8 18.9 Q5.9 18.3 5.6 16.8 Z" fill="#000"/></svg>
<div class="r" style="left:1487px;top:500.2px;width:43px;height:24.6px;border-radius:12.3px;background:#6c6c6c;"></div>
<div class="r" style="left:1486px;top:500.1px;width:24.8px;height:24.8px;border-radius:50%;background:#fff;box-shadow:0 2px 4px rgba(0,0,0,.45);"></div>
<svg class="s" style="left:1486px;top:500.1px;" width="25" height="25" viewBox="0 0 25 25"><path d="M7.0 7.0 L17.8 17.8 M17.8 7.0 L7.0 17.8" stroke="#000" stroke-width="2.2"/></svg>
<div class="r" style="left:1567.5px;top:500.2px;width:43px;height:24.6px;border-radius:12.3px;background:#6c6c6c;"></div>
<div class="r" style="left:1566.5px;top:500.1px;width:24.8px;height:24.8px;border-radius:50%;background:#fff;box-shadow:0 2px 4px rgba(0,0,0,.45);"></div>
<svg class="s" style="left:1566.5px;top:500.1px;" width="25" height="25" viewBox="0 0 25 25"><path d="M7.0 7.0 L17.8 17.8 M17.8 7.0 L7.0 17.8" stroke="#000" stroke-width="2.2"/></svg>
<div class="r" style="left:1649.5px;top:500.2px;width:42px;height:24.6px;border-radius:12.3px;background:#00dcfc;"></div>
<div class="r" style="left:1666.7px;top:500.1px;width:24.8px;height:24.8px;border-radius:50%;background:#fff;box-shadow:0 2px 4px rgba(0,0,0,.45);"></div>
<svg class="s" style="left:1666.7px;top:500.1px;" width="25" height="25" viewBox="0 0 25 25"><path d="M4.9 11.4 Q5.2 9.6 7.2 9.7 Q8.8 9.9 9.3 11.6 L9.8 13.6 L17.6 5.6 Q19.2 4.3 20.1 5.4 Q20.6 6.4 19.6 7.6 L9.6 18.3 Q8.2 19.6 6.8 18.9 Q5.9 18.3 5.6 16.8 Z" fill="#000"/></svg>
<div class="t" style="left:1732.50px;top:510.89px;font-size:20.30px;line-height:24.36px;color:#ffffff;transform:scaleX(0.883);transform-origin:left center;-webkit-text-stroke:0.3px #ffffff;">STRING</div>
<svg class="s" style="left:1862.5px;top:518.8px;" width="14" height="8.5" viewBox="0 0 14 8.5"><path d="M1 1 L13 1 L7.0 7.5 Z" fill="#fff"/></svg>
<div class="r" style="left:1732px;top:542.0px;width:152px;height:2px;background:#a9a9a9;"></div>
<div class="r" style="left:1908.5px;top:542.0px;width:45.5px;height:2px;background:#a9a9a9;"></div>
<div class="r" style="left:1978px;top:507.5px;width:87px;height:30px;overflow:hidden;"><div class="t" style="left:1px;top:2.49px;font-size:20.4px;line-height:24.48px;color:#fff;transform:scaleX(0.93);transform-origin:left center;">{user.nam</div></div>
<div class="r" style="left:1978px;top:542.0px;width:87px;height:2px;background:#a9a9a9;"></div>
<div class="r" style="left:2089px;top:493.5px;width:101.5px;height:38px;border-radius:19.0px;border:3px solid #1fd5ee;box-sizing:border-box;box-shadow:0 1px 3px rgba(0,0,0,.35);"></div>
<div class="t" style="left:2104.10px;top:504.21px;font-size:15.10px;line-height:18.12px;color:#ffffff;transform:scaleX(0.9862);transform-origin:left center;-webkit-text-stroke:0.3px #ffffff;">Action</div>
<svg class="s" style="left:2154px;top:506.7px;" width="14" height="8.5" viewBox="0 0 14 8.5"><path d="M1 1 L13 1 L7.0 7.5 Z" fill="#fff"/></svg>
<div class="r" style="left:2214px;top:479.0px;width:43.6px;height:31px;border-radius:15.5px;border:3px solid #1fd5ee;box-sizing:border-box;box-shadow:0 1px 3px rgba(0,0,0,.35);"></div>
<div class="r" style="left:2214px;top:516.0px;width:43.6px;height:31px;border-radius:15.5px;border:3px solid #1fd5ee;box-sizing:border-box;box-shadow:0 1px 3px rgba(0,0,0,.35);"></div>
<svg class="s" style="left:2228px;top:486.5px;" width="16" height="11" viewBox="0 0 16 11"><path d="M1.2 9.6 L8 2.6 L14.8 9.6" fill="none" stroke="#fff" stroke-width="2.7"/></svg>
<svg class="s" style="left:2228px;top:525.0px;" width="16" height="11" viewBox="0 0 16 11"><path d="M1.2 1.4 L8 8.4 L14.8 1.4" fill="none" stroke="#fff" stroke-width="2.7"/></svg>
<div class="t" style="left:1101.30px;top:601.16px;font-size:16.00px;line-height:19.2px;color:#f2f2f2;transform:scaleX(0.99);transform-origin:left center;-webkit-text-stroke:0.3px #f2f2f2;">Project</div>
<div class="t" style="left:1101.30px;top:625.16px;font-size:16.00px;line-height:19.2px;color:#f2f2f2;transform:scaleX(0.99);transform-origin:left center;-webkit-text-stroke:0.3px #f2f2f2;">date</div>
<div class="r" style="left:1210px;top:609.2px;width:43px;height:24.6px;border-radius:12.3px;background:#6c6c6c;"></div>
<div class="r" style="left:1209px;top:609.1px;width:24.8px;height:24.8px;border-radius:50%;background:#fff;box-shadow:0 2px 4px rgba(0,0,0,.45);"></div>
<svg class="s" style="left:1209px;top:609.1px;" width="25" height="25" viewBox="0 0 25 25"><path d="M7.0 7.0 L17.8 17.8 M17.8 7.0 L7.0 17.8" stroke="#000" stroke-width="2.2"/></svg>
<div class="r" style="left:1295px;top:609.2px;width:43px;height:24.6px;border-radius:12.3px;background:#6c6c6c;"></div>
<div class="r" style="left:1294px;top:609.1px;width:24.8px;height:24.8px;border-radius:50%;background:#fff;box-shadow:0 2px 4px rgba(0,0,0,.45);"></div>
<svg class="s" style="left:1294px;top:609.1px;" width="25" height="25" viewBox="0 0 25 25"><path d="M7.0 7.0 L17.8 17.8 M17.8 7.0 L7.0 17.8" stroke="#000" stroke-width="2.2"/></svg>
<div class="r" style="left:1390.5px;top:609.2px;width:42px;height:24.6px;border-radius:12.3px;background:#00dcfc;"></div>
<div class="r" style="left:1407.7px;top:609.1px;width:24.8px;height:24.8px;border-radius:50%;background:#fff;box-shadow:0 2px 4px rgba(0,0,0,.45);"></div>
<svg class="s" style="left:1407.7px;top:609.1px;" width="25" height="25" viewBox="0 0 25 25"><path d="M4.9 11.4 Q5.2 9.6 7.2 9.7 Q8.8 9.9 9.3 11.6 L9.8 13.6 L17.6 5.6 Q19.2 4.3 20.1 5.4 Q20.6 6.4 19.6 7.6 L9.6 18.3 Q8.2 19.6 6.8 18.9 Q5.9 18.3 5.6 16.8 Z" fill="#000"/></svg>
<div class="r" style="left:1487px;top:609.2px;width:43px;height:24.6px;border-radius:12.3px;background:#6c6c6c;"></div>
<div class="r" style="left:1486px;top:609.1px;width:24.8px;height:24.8px;border-radius:50%;background:#fff;box-shadow:0 2px 4px rgba(0,0,0,.45);"></div>
<svg class="s" style="left:1486px;top:609.1px;" width="25" height="25" viewBox="0 0 25 25"><path d="M7.0 7.0 L17.8 17.8 M17.8 7.0 L7.0 17.8" stroke="#000" stroke-width="2.2"/></svg>
<div class="r" style="left:1568.5px;top:609.2px;width:42px;height:24.6px;border-radius:12.3px;background:#00dcfc;"></div>
<div class="r" style="left:1585.7px;top:609.1px;width:24.8px;height:24.8px;border-radius:50%;background:#fff;box-shadow:0 2px 4px rgba(0,0,0,.45);"></div>
<svg class="s" style="left:1585.7px;top:609.1px;" width="25" height="25" viewBox="0 0 25 25"><path d="M4.9 11.4 Q5.2 9.6 7.2 9.7 Q8.8 9.9 9.3 11.6 L9.8 13.6 L17.6 5.6 Q19.2 4.3 20.1 5.4 Q20.6 6.4 19.6 7.6 L9.6 18.3 Q8.2 19.6 6.8 18.9 Q5.9 18.3 5.6 16.8 Z" fill="#000"/></svg>
<div class="r" style="left:1649.5px;top:609.2px;width:42px;height:24.6px;border-radius:12.3px;background:#00dcfc;"></div>
<div class="r" style="left:1666.7px;top:609.1px;width:24.8px;height:24.8px;border-radius:50%;background:#fff;box-shadow:0 2px 4px rgba(0,0,0,.45);"></div>
<svg class="s" style="left:1666.7px;top:609.1px;" width="25" height="25" viewBox="0 0 25 25"><path d="M4.9 11.4 Q5.2 9.6 7.2 9.7 Q8.8 9.9 9.3 11.6 L9.8 13.6 L17.6 5.6 Q19.2 4.3 20.1 5.4 Q20.6 6.4 19.6 7.6 L9.6 18.3 Q8.2 19.6 6.8 18.9 Q5.9 18.3 5.6 16.8 Z" fill="#000"/></svg>
<div class="t" style="left:1732.50px;top:619.89px;font-size:20.30px;line-height:24.36px;color:#ffffff;transform:scaleX(0.883);transform-origin:left center;-webkit-text-stroke:0.3px #ffffff;">DATE</div>
<svg class="s" style="left:1862.5px;top:627.8px;" width="14" height="8.5" viewBox="0 0 14 8.5"><path d="M1 1 L13 1 L7.0 7.5 Z" fill="#fff"/></svg>
<div class="r" style="left:1732px;top:651.0px;width:152px;height:2px;background:#a9a9a9;"></div>
<div class="r" style="left:1908.5px;top:651.0px;width:45.5px;height:2px;background:#a9a9a9;"></div>
<div class="r" style="left:1978px;top:616.5px;width:87px;height:30px;overflow:hidden;"><div class="t" style="left:1px;top:2.49px;font-size:20.4px;line-height:24.48px;color:#fff;transform:scaleX(0.93);transform-origin:left center;">+0</div></div>
<div class="r" style="left:1978px;top:651.0px;width:87px;height:2px;background:#a9a9a9;"></div>
<div class="r" style="left:2089px;top:602.5px;width:101.5px;height:38px;border-radius:19.0px;border:3px solid #1fd5ee;box-sizing:border-box;box-shadow:0 1px 3px rgba(0,0,0,.35);"></div>
<div class="t" style="left:2104.10px;top:613.21px;font-size:15.10px;line-height:18.12px;color:#ffffff;transform:scaleX(0.9862);transform-origin:left center;-webkit-text-stroke:0.3px #ffffff;">Action</div>
<svg class="s" style="left:2154px;top:615.7px;" width="14" height="8.5" viewBox="0 0 14 8.5"><path d="M1 1 L13 1 L7.0 7.5 Z" fill="#fff"/></svg>
<div class="r" style="left:2214px;top:588.0px;width:43.6px;height:31px;border-radius:15.5px;border:3px solid #1fd5ee;box-sizing:border-box;box-shadow:0 1px 3px rgba(0,0,0,.35);"></div>
<div class="r" style="left:2214px;top:625.0px;width:43.6px;height:31px;border-radius:15.5px;border:3px solid #1fd5ee;box-sizing:border-box;box-shadow:0 1px 3px rgba(0,0,0,.35);"></div>
<svg class="s" style="left:2228px;top:595.5px;" width="16" height="11" viewBox="0 0 16 11"><path d="M1.2 9.6 L8 2.6 L14.8 9.6" fill="none" stroke="#fff" stroke-width="2.7"/></svg>
<svg class="s" style="left:2228px;top:634.0px;" width="16" height="11" viewBox="0 0 16 11"><path d="M1.2 1.4 L8 8.4 L14.8 1.4" fill="none" stroke="#fff" stroke-width="2.7"/></svg>
<div class="t" style="left:1101.30px;top:710.16px;font-size:16.00px;line-height:19.2px;color:#f2f2f2;transform:scaleX(0.99);transform-origin:left center;-webkit-text-stroke:0.3px #f2f2f2;">Journalistic</div>
<div class="t" style="left:1101.30px;top:734.16px;font-size:16.00px;line-height:19.2px;color:#f2f2f2;transform:scaleX(0.99);transform-origin:left center;-webkit-text-stroke:0.3px #f2f2f2;">editor</div>
<div class="r" style="left:1210px;top:718.2px;width:43px;height:24.6px;border-radius:12.3px;background:#6c6c6c;"></div>
<div class="r" style="left:1209px;top:718.1px;width:24.8px;height:24.8px;border-radius:50%;background:#fff;box-shadow:0 2px 4px rgba(0,0,0,.45);"></div>
<svg class="s" style="left:1209px;top:718.1px;" width="25" height="25" viewBox="0 0 25 25"><path d="M7.0 7.0 L17.8 17.8 M17.8 7.0 L7.0 17.8" stroke="#000" stroke-width="2.2"/></svg>
<div class="r" style="left:1295px;top:718.2px;width:43px;height:24.6px;border-radius:12.3px;background:#6c6c6c;"></div>
<div class="r" style="left:1294px;top:718.1px;width:24.8px;height:24.8px;border-radius:50%;background:#fff;box-shadow:0 2px 4px rgba(0,0,0,.45);"></div>
<svg class="s" style="left:1294px;top:718.1px;" width="25" height="25" viewBox="0 0 25 25"><path d="M7.0 7.0 L17.8 17.8 M17.8 7.0 L7.0 17.8" stroke="#000" stroke-width="2.2"/></svg>
<div class="r" style="left:1390.5px;top:718.2px;width:42px;height:24.6px;border-radius:12.3px;background:#00dcfc;"></div>
<div class="r" style="left:1407.7px;top:718.1px;width:24.8px;height:24.8px;border-radius:50%;background:#fff;box-shadow:0 2px 4px rgba(0,0,0,.45);"></div>
<svg class="s" style="left:1407.7px;top:718.1px;" width="25" height="25" viewBox="0 0 25 25"><path d="M4.9 11.4 Q5.2 9.6 7.2 9.7 Q8.8 9.9 9.3 11.6 L9.8 13.6 L17.6 5.6 Q19.2 4.3 20.1 5.4 Q20.6 6.4 19.6 7.6 L9.6 18.3 Q8.2 19.6 6.8 18.9 Q5.9 18.3 5.6 16.8 Z" fill="#000"/></svg>
<div class="r" style="left:1487px;top:718.2px;width:43px;height:24.6px;border-radius:12.3px;background:#6c6c6c;"></div>
<div class="r" style="left:1486px;top:718.1px;width:24.8px;height:24.8px;border-radius:50%;background:#fff;box-shadow:0 2px 4px rgba(0,0,0,.45);"></div>
<svg class="s" style="left:1486px;top:718.1px;" width="25" height="25" viewBox="0 0 25 25"><path d="M7.0 7.0 L17.8 17.8 M17.8 7.0 L7.0 17.8" stroke="#000" stroke-width="2.2"/></svg>
<div class="r" style="left:1567.5px;top:718.2px;width:43px;height:24.6px;border-radius:12.3px;background:#6c6c6c;"></div>
<div class="r" style="left:1566.5px;top:718.1px;width:24.8px;height:24.8px;border-radius:50%;background:#fff;box-shadow:0 2px 4px rgba(0,0,0,.45);"></div>
<svg class="s" style="left:1566.5px;top:718.1px;" width="25" height="25" viewBox="0 0 25 25"><path d="M7.0 7.0 L17.8 17.8 M17.8 7.0 L7.0 17.8" stroke="#000" stroke-width="2.2"/></svg>
<div class="r" style="left:1649.5px;top:718.2px;width:42px;height:24.6px;border-radius:12.3px;background:#00dcfc;"></div>
<div class="r" style="left:1666.7px;top:718.1px;width:24.8px;height:24.8px;border-radius:50%;background:#fff;box-shadow:0 2px 4px rgba(0,0,0,.45);"></div>
<svg class="s" style="left:1666.7px;top:718.1px;" width="25" height="25" viewBox="0 0 25 25"><path d="M4.9 11.4 Q5.2 9.6 7.2 9.7 Q8.8 9.9 9.3 11.6 L9.8 13.6 L17.6 5.6 Q19.2 4.3 20.1 5.4 Q20.6 6.4 19.6 7.6 L9.6 18.3 Q8.2 19.6 6.8 18.9 Q5.9 18.3 5.6 16.8 Z" fill="#000"/></svg>
<div class="t" style="left:1732.50px;top:728.89px;font-size:20.30px;line-height:24.36px;color:#ffffff;transform:scaleX(0.883);transform-origin:left center;-webkit-text-stroke:0.3px #ffffff;">TYPEAHEAD</div>
<svg class="s" style="left:1862.5px;top:736.8px;" width="14" height="8.5" viewBox="0 0 14 8.5"><path d="M1 1 L13 1 L7.0 7.5 Z" fill="#fff"/></svg>
<div class="r" style="left:1732px;top:760.0px;width:152px;height:2px;background:#a9a9a9;"></div>
<div class="r" style="left:1908px;top:725.5px;width:46px;height:30px;overflow:hidden;"><div class="t" style="left:0.5px;top:2.49px;font-size:20.4px;line-height:24.48px;color:#fff;transform:scaleX(0.93);transform-origin:left center;">Chels</div></div>
<div class="r" style="left:1908.5px;top:760.0px;width:45.5px;height:2px;background:#a9a9a9;"></div>
<div class="r" style="left:1978px;top:760.0px;width:87px;height:2px;background:#a9a9a9;"></div>
<div class="r" style="left:2089px;top:711.5px;width:101.5px;height:38px;border-radius:19.0px;border:3px solid #1fd5ee;box-sizing:border-box;box-shadow:0 1px 3px rgba(0,0,0,.35);"></div>
<div class="t" style="left:2104.10px;top:722.21px;font-size:15.10px;line-height:18.12px;color:#ffffff;transform:scaleX(0.9862);transform-origin:left center;-webkit-text-stroke:0.3px #ffffff;">Action</div>
<svg class="s" style="left:2154px;top:724.7px;" width="14" height="8.5" viewBox="0 0 14 8.5"><path d="M1 1 L13 1 L7.0 7.5 Z" fill="#fff"/></svg>
<div class="r" style="left:2214px;top:697.0px;width:43.6px;height:31px;border-radius:15.5px;border:3px solid #1fd5ee;box-sizing:border-box;box-shadow:0 1px 3px rgba(0,0,0,.35);"></div>
<div class="r" style="left:2214px;top:734.0px;width:43.6px;height:31px;border-radius:15.5px;border:3px solid #1fd5ee;box-sizing:border-box;box-shadow:0 1px 3px rgba(0,0,0,.35);"></div>
<svg class="s" style="left:2228px;top:704.5px;" width="16" height="11" viewBox="0 0 16 11"><path d="M1.2 9.6 L8 2.6 L14.8 9.6" fill="none" stroke="#fff" stroke-width="2.7"/></svg>
<svg class="s" style="left:2228px;top:743.0px;" width="16" height="11" viewBox="0 0 16 11"><path d="M1.2 1.4 L8 8.4 L14.8 1.4" fill="none" stroke="#fff" stroke-width="2.7"/></svg>
<div class="t" style="left:1101.30px;top:819.16px;font-size:16.00px;line-height:19.2px;color:#f2f2f2;transform:scaleX(0.99);transform-origin:left center;-webkit-text-stroke:0.3px #f2f2f2;">Date of</div>
<div class="t" style="left:1101.30px;top:843.16px;font-size:16.00px;line-height:19.2px;color:#f2f2f2;transform:scaleX(0.99);transform-origin:left center;-webkit-text-stroke:0.3px #f2f2f2;">Deletion</div>
<div class="r" style="left:1210px;top:827.2px;width:43px;height:24.6px;border-radius:12.3px;background:#6c6c6c;"></div>
<div class="r" style="left:1209px;top:827.1px;width:24.8px;height:24.8px;border-radius:50%;background:#fff;box-shadow:0 2px 4px rgba(0,0,0,.45);"></div>
<svg class="s" style="left:1209px;top:827.1px;" width="25" height="25" viewBox="0 0 25 25"><path d="M7.0 7.0 L17.8 17.8 M17.8 7.0 L7.0 17.8" stroke="#000" stroke-width="2.2"/></svg>
<div class="r" style="left:1295px;top:827.2px;width:43px;height:24.6px;border-radius:12.3px;background:#6c6c6c;"></div>
<div class="r" style="left:1294px;top:827.1px;width:24.8px;height:24.8px;border-radius:50%;background:#fff;box-shadow:0 2px 4px rgba(0,0,0,.45);"></div>
<svg class="s" style="left:1294px;top:827.1px;" width="25" height="25" viewBox="0 0 25 25"><path d="M7.0 7.0 L17.8 17.8 M17.8 7.0 L7.0 17.8" stroke="#000" stroke-width="2.2"/></svg>
<div class="r" style="left:1390.5px;top:827.2px;width:42px;height:24.6px;border-radius:12.3px;background:#00dcfc;"></div>
<div class="r" style="left:1407.7px;top:827.1px;width:24.8px;height:24.8px;border-radius:50%;background:#fff;box-shadow:0 2px 4px rgba(0,0,0,.45);"></div>
<svg class="s" style="left:1407.7px;top:827.1px;" width="25" height="25" viewBox="0 0 25 25"><path d="M4.9 11.4 Q5.2 9.6 7.2 9.7 Q8.8 9.9 9.3 11.6 L9.8 13.6 L17.6 5.6 Q19.2 4.3 20.1 5.4 Q20.6 6.4 19.6 7.6 L9.6 18.3 Q8.2 19.6 6.8 18.9 Q5.9 18.3 5.6 16.8 Z" fill="#000"/></svg>
<div class="r" style="left:1488px;top:827.2px;width:42px;height:24.6px;border-radius:12.3px;background:#00dcfc;"></div>
<div class="r" style="left:1505.2px;top:827.1px;width:24.8px;height:24.8px;border-radius:50%;background:#fff;box-shadow:0 2px 4px rgba(0,0,0,.45);"></div>
<svg class="s" style="left:1505.2px;top:827.1px;" width="25" height="25" viewBox="0 0 25 25"><path d="M4.9 11.4 Q5.2 9.6 7.2 9.7 Q8.8 9.9 9.3 11.6 L9.8 13.6 L17.6 5.6 Q19.2 4.3 20.1 5.4 Q20.6 6.4 19.6 7.6 L9.6 18.3 Q8.2 19.6 6.8 18.9 Q5.9 18.3 5.6 16.8 Z" fill="#000"/></svg>
<div class="r" style="left:1567.5px;top:827.2px;width:43px;height:24.6px;border-radius:12.3px;background:#6c6c6c;"></div>
<div class="r" style="left:1566.5px;top:827.1px;width:24.8px;height:24.8px;border-radius:50%;background:#fff;box-shadow:0 2px 4px rgba(0,0,0,.45);"></div>
<svg class="s" style="left:1566.5px;top:827.1px;" width="25" height="25" viewBox="0 0 25 25"><path d="M7.0 7.0 L17.8 17.8 M17.8 7.0 L7.0 17.8" stroke="#000" stroke-width="2.2"/></svg>
<div class="r" style="left:1649.5px;top:827.2px;width:42px;height:24.6px;border-radius:12.3px;background:#00dcfc;"></div>
<div class="r" style="left:1666.7px;top:827.1px;width:24.8px;height:24.8px;border-radius:50%;background:#fff;box-shadow:0 2px 4px rgba(0,0,0,.45);"></div>
<svg class="s" style="left:1666.7px;top:827.1px;" width="25" height="25" viewBox="0 0 25 25"><path d="M4.9 11.4 Q5.2 9.6 7.2 9.7 Q8.8 9.9 9.3 11.6 L9.8 13.6 L17.6 5.6 Q19.2 4.3 20.1 5.4 Q20.6 6.4 19.6 7.6 L9.6 18.3 Q8.2 19.6 6.8 18.9 Q5.9 18.3 5.6 16.8 Z" fill="#000"/></svg>
<div class="t" style="left:1732.50px;top:837.89px;font-size:20.30px;line-height:24.36px;color:#ffffff;transform:scaleX(0.883);transform-origin:left center;-webkit-text-stroke:0.3px #ffffff;">DATE</div>
<svg class="s" style="left:1862.5px;top:845.8px;" width="14" height="8.5" viewBox="0 0 14 8.5"><path d="M1 1 L13 1 L7.0 7.5 Z" fill="#fff"/></svg>
<div class="r" style="left:1732px;top:869.0px;width:152px;height:2px;background:#a9a9a9;"></div>
<div class="r" style="left:1908.5px;top:869.0px;width:45.5px;height:2px;background:#a9a9a9;"></div>
<div class="r" style="left:1978px;top:834.5px;width:87px;height:30px;overflow:hidden;"><div class="t" style="left:1px;top:2.49px;font-size:20.4px;line-height:24.48px;color:#fff;transform:scaleX(0.93);transform-origin:left center;">{helmut.va</div></div>
<div class="r" style="left:1978px;top:869.0px;width:87px;height:2px;background:#a9a9a9;"></div>
<div class="r" style="left:2089px;top:820.5px;width:101.5px;height:38px;border-radius:19.0px;border:3px solid #1fd5ee;box-sizing:border-box;box-shadow:0 1px 3px rgba(0,0,0,.35);"></div>
<div class="t" style="left:2104.10px;top:831.21px;font-size:15.10px;line-height:18.12px;color:#ffffff;transform:scaleX(0.9862);transform-origin:left center;-webkit-text-stroke:0.3px #ffffff;">Action</div>
<svg class="s" style="left:2154px;top:833.7px;" width="14" height="8.5" viewBox="0 0 14 8.5"><path d="M1 1 L13 1 L7.0 7.5 Z" fill="#fff"/></svg>
<div class="r" style="left:2214px;top:806.0px;width:43.6px;height:31px;border-radius:15.5px;border:3px solid #1fd5ee;box-sizing:border-box;box-shadow:0 1px 3px rgba(0,0,0,.35);"></div>
<div class="r" style="left:2214px;top:843.0px;width:43.6px;height:31px;border-radius:15.5px;border:3px solid #1fd5ee;box-sizing:border-box;box-shadow:0 1px 3px rgba(0,0,0,.35);"></div>
<svg class="s" style="left:2228px;top:813.5px;" width="16" height="11" viewBox="0 0 16 11"><path d="M1.2 9.6 L8 2.6 L14.8 9.6" fill="none" stroke="#fff" stroke-width="2.7"/></svg>
<svg class="s" style="left:2228px;top:852.0px;" width="16" height="11" viewBox="0 0 16 11"><path d="M1.2 1.4 L8 8.4 L14.8 1.4" fill="none" stroke="#fff" stroke-width="2.7"/></svg>
<div class="t" style="left:1101.30px;top:916.16px;font-size:16.00px;line-height:19.2px;color:#f2f2f2;transform:scaleX(0.99);transform-origin:left center;-webkit-text-stroke:0.3px #f2f2f2;">genuine-</div>
<div class="t" style="left:1101.30px;top:940.16px;font-size:16.00px;line-height:19.2px;color:#f2f2f2;transform:scaleX(0.99);transform-origin:left center;-webkit-text-stroke:0.3px #f2f2f2;">project-</div>
<div class="t" style="left:1101.30px;top:964.16px;font-size:16.00px;line-height:19.2px;color:#f2f2f2;transform:scaleX(0.99);transform-origin:left center;-webkit-text-stroke:0.3px #f2f2f2;">name</div>
<div class="r" style="left:1211px;top:936.2px;width:42px;height:24.6px;border-radius:12.3px;background:#00dcfc;"></div>
<div class="r" style="left:1228.2px;top:936.1px;width:24.8px;height:24.8px;border-radius:50%;background:#fff;box-shadow:0 2px 4px rgba(0,0,0,.45);"></div>
<svg class="s" style="left:1228.2px;top:936.1px;" width="25" height="25" viewBox="0 0 25 25"><path d="M4.9 11.4 Q5.2 9.6 7.2 9.7 Q8.8 9.9 9.3 11.6 L9.8 13.6 L17.6 5.6 Q19.2 4.3 20.1 5.4 Q20.6 6.4 19.6 7.6 L9.6 18.3 Q8.2 19.6 6.8 18.9 Q5.9 18.3 5.6 16.8 Z" fill="#000"/></svg>
<div class="r" style="left:1295px;top:936.2px;width:43px;height:24.6px;border-radius:12.3px;background:#6c6c6c;"></div>
<div class="r" style="left:1294px;top:936.1px;width:24.8px;height:24.8px;border-radius:50%;background:#fff;box-shadow:0 2px 4px rgba(0,0,0,.45);"></div>
<svg class="s" style="left:1294px;top:936.1px;" width="25" height="25" viewBox="0 0 25 25"><path d="M7.0 7.0 L17.8 17.8 M17.8 7.0 L7.0 17.8" stroke="#000" stroke-width="2.2"/></svg>
<div class="r" style="left:1389.5px;top:936.2px;width:43px;height:24.6px;border-radius:12.3px;background:#6c6c6c;"></div>
<div class="r" style="left:1388.5px;top:936.1px;width:24.8px;height:24.8px;border-radius:50%;background:#fff;box-shadow:0 2px 4px rgba(0,0,0,.45);"></div>
<svg class="s" style="left:1388.5px;top:936.1px;" width="25" height="25" viewBox="0 0 25 25"><path d="M7.0 7.0 L17.8 17.8 M17.8 7.0 L7.0 17.8" stroke="#000" stroke-width="2.2"/></svg>
<div class="r" style="left:1488px;top:936.2px;width:42px;height:24.6px;border-radius:12.3px;background:#00dcfc;"></div>
<div class="r" style="left:1505.2px;top:936.1px;width:24.8px;height:24.8px;border-radius:50%;background:#fff;box-shadow:0 2px 4px rgba(0,0,0,.45);"></div>
<svg class="s" style="left:1505.2px;top:936.1px;" width="25" height="25" viewBox="0 0 25 25"><path d="M4.9 11.4 Q5.2 9.6 7.2 9.7 Q8.8 9.9 9.3 11.6 L9.8 13.6 L17.6 5.6 Q19.2 4.3 20.1 5.4 Q20.6 6.4 19.6 7.6 L9.6 18.3 Q8.2 19.6 6.8 18.9 Q5.9 18.3 5.6 16.8 Z" fill="#000"/></svg>
<div class="r" style="left:1567.5px;top:936.2px;width:43px;height:24.6px;border-radius:12.3px;background:#6c6c6c;"></div>
<div class="r" style="left:1566.5px;top:936.1px;width:24.8px;height:24.8px;border-radius:50%;background:#fff;box-shadow:0 2px 4px rgba(0,0,0,.45);"></div>
<svg class="s" style="left:1566.5px;top:936.1px;" width="25" height="25" viewBox="0 0 25 25"><path d="M7.0 7.0 L17.8 17.8 M17.8 7.0 L7.0 17.8" stroke="#000" stroke-width="2.2"/></svg>
<div class="r" style="left:1648.5px;top:936.2px;width:43px;height:24.6px;border-radius:12.3px;background:#6c6c6c;"></div>
<div class="r" style="left:1647.5px;top:936.1px;width:24.8px;height:24.8px;border-radius:50%;background:#fff;box-shadow:0 2px 4px rgba(0,0,0,.45);"></div>
<svg class="s" style="left:1647.5px;top:936.1px;" width="25" height="25" viewBox="0 0 25 25"><path d="M7.0 7.0 L17.8 17.8 M17.8 7.0 L7.0 17.8" stroke="#000" stroke-width="2.2"/></svg>
<div class="t" style="left:1732.50px;top:946.89px;font-size:20.30px;line-height:24.36px;color:#ffffff;transform:scaleX(0.883);transform-origin:left center;-webkit-text-stroke:0.3px #ffffff;">STRING</div>
<svg class="s" style="left:1862.5px;top:954.8px;" width="14" height="8.5" viewBox="0 0 14 8.5"><path d="M1 1 L13 1 L7.0 7.5 Z" fill="#fff"/></svg>
<div class="r" style="left:1732px;top:978.0px;width:152px;height:2px;background:#a9a9a9;"></div>
<div class="r" style="left:1908.5px;top:978.0px;width:45.5px;height:2px;background:#a9a9a9;"></div>
<div class="r" style="left:1978px;top:978.0px;width:87px;height:2px;background:#a9a9a9;"></div>
<div class="r" style="left:2089px;top:929.5px;width:101.5px;height:38px;border-radius:19.0px;border:3px solid #1fd5ee;box-sizing:border-box;box-shadow:0 1px 3px rgba(0,0,0,.35);"></div>
<div class="t" style="left:2104.10px;top:940.21px;font-size:15.10px;line-height:18.12px;color:#ffffff;transform:scaleX(0.9862);transform-origin:left center;-webkit-text-stroke:0.3px #ffffff;">Action</div>
<svg class="s" style="left:2154px;top:942.7px;" width="14" height="8.5" viewBox="0 0 14 8.5"><path d="M1 1 L13 1 L7.0 7.5 Z" fill="#fff"/></svg>
<div class="r" style="left:2214px;top:915.0px;width:43.6px;height:31px;border-radius:15.5px;border:3px solid #1fd5ee;box-sizing:border-box;box-shadow:0 1px 3px rgba(0,0,0,.35);"></div>
<div class="r" style="left:2214px;top:952.0px;width:43.6px;height:31px;border-radius:15.5px;border:3px solid #1fd5ee;box-sizing:border-box;box-shadow:0 1px 3px rgba(0,0,0,.35);"></div>
<svg class="s" style="left:2228px;top:922.5px;" width="16" height="11" viewBox="0 0 16 11"><path d="M1.2 9.6 L8 2.6 L14.8 9.6" fill="none" stroke="#fff" stroke-width="2.7"/></svg>
<svg class="s" style="left:2228px;top:961.0px;" width="16" height="11" viewBox="0 0 16 11"><path d="M1.2 1.4 L8 8.4 L14.8 1.4" fill="none" stroke="#fff" stroke-width="2.7"/></svg>
<div class="t" style="left:1101.30px;top:1049.16px;font-size:16.00px;line-height:19.2px;color:#f2f2f2;transform:scaleX(0.99);transform-origin:left center;-webkit-text-stroke:0.3px #f2f2f2;">Status</div>
<div class="r" style="left:1210px;top:1045.2px;width:43px;height:24.6px;border-radius:12.3px;background:#6c6c6c;"></div>
<div class="r" style="left:1209px;top:1045.1px;width:24.8px;height:24.8px;border-radius:50%;background:#fff;box-shadow:0 2px 4px rgba(0,0,0,.45);"></div>
<svg class="s" style="left:1209px;top:1045.1px;" width="25" height="25" viewBox="0 0 25 25"><path d="M7.0 7.0 L17.8 17.8 M17.8 7.0 L7.0 17.8" stroke="#000" stroke-width="2.2"/></svg>
<div class="r" style="left:1295px;top:1045.2px;width:43px;height:24.6px;border-radius:12.3px;background:#6c6c6c;"></div>
<div class="r" style="left:1294px;top:1045.1px;width:24.8px;height:24.8px;border-radius:50%;background:#fff;box-shadow:0 2px 4px rgba(0,0,0,.45);"></div>
<svg class="s" style="left:1294px;top:1045.1px;" width="25" height="25" viewBox="0 0 25 25"><path d="M7.0 7.0 L17.8 17.8 M17.8 7.0 L7.0 17.8" stroke="#000" stroke-width="2.2"/></svg>
<div class="r" style="left:1389.5px;top:1045.2px;width:43px;height:24.6px;border-radius:12.3px;background:#6c6c6c;"></div>
<div class="r" style="left:1388.5px;top:1045.1px;width:24.8px;height:24.8px;border-radius:50%;background:#fff;box-shadow:0 2px 4px rgba(0,0,0,.45);"></div>
<svg class="s" style="left:1388.5px;top:1045.1px;" width="25" height="25" viewBox="0 0 25 25"><path d="M7.0 7.0 L17.8 17.8 M17.8 7.0 L7.0 17.8" stroke="#000" stroke-width="2.2"/></svg>
<div class="r" style="left:1488px;top:1045.2px;width:42px;height:24.6px;border-radius:12.3px;background:#00dcfc;"></div>
<div class="r" style="left:1505.2px;top:1045.1px;width:24.8px;height:24.8px;border-radius:50%;background:#fff;box-shadow:0 2px 4px rgba(0,0,0,.45);"></div>
<svg class="s" style="left:1505.2px;top:1045.1px;" width="25" height="25" viewBox="0 0 25 25"><path d="M4.9 11.4 Q5.2 9.6 7.2 9.7 Q8.8 9.9 9.3 11.6 L9.8 13.6 L17.6 5.6 Q19.2 4.3 20.1 5.4 Q20.6 6.4 19.6 7.6 L9.6 18.3 Q8.2 19.6 6.8 18.9 Q5.9 18.3 5.6 16.8 Z" fill="#000"/></svg>
<div class="r" style="left:1567.5px;top:1045.2px;width:43px;height:24.6px;border-radius:12.3px;background:#6c6c6c;"></div>
<div class="r" style="left:1566.5px;top:1045.1px;width:24.8px;height:24.8px;border-radius:50%;background:#fff;box-shadow:0 2px 4px rgba(0,0,0,.45);"></div>
<svg class="s" style="left:1566.5px;top:1045.1px;" width="25" height="25" viewBox="0 0 25 25"><path d="M7.0 7.0 L17.8 17.8 M17.8 7.0 L7.0 17.8" stroke="#000" stroke-width="2.2"/></svg>
<div class="r" style="left:1649.5px;top:1045.2px;width:42px;height:24.6px;border-radius:12.3px;background:#00dcfc;"></div>
<div class="r" style="left:1666.7px;top:1045.1px;width:24.8px;height:24.8px;border-radius:50%;background:#fff;box-shadow:0 2px 4px rgba(0,0,0,.45);"></div>
<svg class="s" style="left:1666.7px;top:1045.1px;" width="25" height="25" viewBox="0 0 25 25"><path d="M4.9 11.4 Q5.2 9.6 7.2 9.7 Q8.8 9.9 9.3 11.6 L9.8 13.6 L17.6 5.6 Q19.2 4.3 20.1 5.4 Q20.6 6.4 19.6 7.6 L9.6 18.3 Q8.2 19.6 6.8 18.9 Q5.9 18.3 5.6 16.8 Z" fill="#000"/></svg>
<div class="t" style="left:1732.50px;top:1055.89px;font-size:20.30px;line-height:24.36px;color:#ffffff;transform:scaleX(0.883);transform-origin:left center;-webkit-text-stroke:0.3px #ffffff;">SELECT</div>
<svg class="s" style="left:1862.5px;top:1063.8px;" width="14" height="8.5" viewBox="0 0 14 8.5"><path d="M1 1 L13 1 L7.0 7.5 Z" fill="#fff"/></svg>
<div class="r" style="left:1732px;top:1087.0px;width:152px;height:2px;background:#a9a9a9;"></div>
<div class="r" style="left:1908px;top:1052.5px;width:46px;height:30px;overflow:hidden;"><div class="t" style="left:0.5px;top:2.49px;font-size:20.4px;line-height:24.48px;color:#fff;transform:scaleX(0.93);transform-origin:left center;">New,Open</div></div>
<div class="r" style="left:1908.5px;top:1087.0px;width:45.5px;height:2px;background:#a9a9a9;"></div>
<div class="r" style="left:1978px;top:1052.5px;width:87px;height:30px;overflow:hidden;"><div class="t" style="left:1px;top:2.49px;font-size:20.4px;line-height:24.48px;color:#fff;transform:scaleX(0.93);transform-origin:left center;">New</div></div>
<div class="r" style="left:1978px;top:1087.0px;width:87px;height:2px;background:#a9a9a9;"></div>
<div class="r" style="left:2089px;top:1038.5px;width:101.5px;height:38px;border-radius:19.0px;border:3px solid #1fd5ee;box-sizing:border-box;box-shadow:0 1px 3px rgba(0,0,0,.35);"></div>
<div class="t" style="left:2104.10px;top:1049.21px;font-size:15.10px;line-height:18.12px;color:#ffffff;transform:scaleX(0.9862);transform-origin:left center;-webkit-text-stroke:0.3px #ffffff;">Action</div>
<svg class="s" style="left:2154px;top:1051.7px;" width="14" height="8.5" viewBox="0 0 14 8.5"><path d="M1 1 L13 1 L7.0 7.5 Z" fill="#fff"/></svg>
<div class="r" style="left:2214px;top:1024.0px;width:43.6px;height:31px;border-radius:15.5px;border:3px solid #1fd5ee;box-sizing:border-box;box-shadow:0 1px 3px rgba(0,0,0,.35);"></div>
<div class="r" style="left:2214px;top:1061.0px;width:43.6px;height:31px;border-radius:15.5px;border:3px solid #1fd5ee;box-sizing:border-box;box-shadow:0 1px 3px rgba(0,0,0,.35);"></div>
<svg class="s" style="left:2228px;top:1031.5px;" width="16" height="11" viewBox="0 0 16 11"><path d="M1.2 9.6 L8 2.6 L14.8 9.6" fill="none" stroke="#fff" stroke-width="2.7"/></svg>
<svg class="s" style="left:2228px;top:1070.0px;" width="16" height="11" viewBox="0 0 16 11"><path d="M1.2 1.4 L8 8.4 L14.8 1.4" fill="none" stroke="#fff" stroke-width="2.7"/></svg>
<div class="t" style="left:1101.30px;top:1134.16px;font-size:16.00px;line-height:19.2px;color:#f2f2f2;transform:scaleX(0.99);transform-origin:left center;-webkit-text-stroke:0.3px #f2f2f2;">genuine-</div>
<div class="t" style="left:1101.30px;top:1158.16px;font-size:16.00px;line-height:19.2px;color:#f2f2f2;transform:scaleX(0.99);transform-origin:left center;-webkit-text-stroke:0.3px #f2f2f2;">project-</div>
<div class="t" style="left:1101.30px;top:1182.16px;font-size:16.00px;line-height:19.2px;color:#f2f2f2;transform:scaleX(0.99);transform-origin:left center;-webkit-text-stroke:0.3px #f2f2f2;">date</div>
<div class="r" style="left:1211px;top:1154.2px;width:42px;height:24.6px;border-radius:12.3px;background:#00dcfc;"></div>
<div class="r" style="left:1228.2px;top:1154.1px;width:24.8px;height:24.8px;border-radius:50%;background:#fff;box-shadow:0 2px 4px rgba(0,0,0,.45);"></div>
<svg class="s" style="left:1228.2px;top:1154.1px;" width="25" height="25" viewBox="0 0 25 25"><path d="M4.9 11.4 Q5.2 9.6 7.2 9.7 Q8.8 9.9 9.3 11.6 L9.8 13.6 L17.6 5.6 Q19.2 4.3 20.1 5.4 Q20.6 6.4 19.6 7.6 L9.6 18.3 Q8.2 19.6 6.8 18.9 Q5.9 18.3 5.6 16.8 Z" fill="#000"/></svg>
<div class="r" style="left:1295px;top:1154.2px;width:43px;height:24.6px;border-radius:12.3px;background:#6c6c6c;"></div>
<div class="r" style="left:1294px;top:1154.1px;width:24.8px;height:24.8px;border-radius:50%;background:#fff;box-shadow:0 2px 4px rgba(0,0,0,.45);"></div>
<svg class="s" style="left:1294px;top:1154.1px;" width="25" height="25" viewBox="0 0 25 25"><path d="M7.0 7.0 L17.8 17.8 M17.8 7.0 L7.0 17.8" stroke="#000" stroke-width="2.2"/></svg>
<div class="r" style="left:1389.5px;top:1154.2px;width:43px;height:24.6px;border-radius:12.3px;background:#6c6c6c;"></div>
<div class="r" style="left:1388.5px;top:1154.1px;width:24.8px;height:24.8px;border-radius:50%;background:#fff;box-shadow:0 2px 4px rgba(0,0,0,.45);"></div>
<svg class="s" style="left:1388.5px;top:1154.1px;" width="25" height="25" viewBox="0 0 25 25"><path d="M7.0 7.0 L17.8 17.8 M17.8 7.0 L7.0 17.8" stroke="#000" stroke-width="2.2"/></svg>
<div class="r" style="left:1488px;top:1154.2px;width:42px;height:24.6px;border-radius:12.3px;background:#00dcfc;"></div>
<div class="r" style="left:1505.2px;top:1154.1px;width:24.8px;height:24.8px;border-radius:50%;background:#fff;box-shadow:0 2px 4px rgba(0,0,0,.45);"></div>
<svg class="s" style="left:1505.2px;top:1154.1px;" width="25" height="25" viewBox="0 0 25 25"><path d="M4.9 11.4 Q5.2 9.6 7.2 9.7 Q8.8 9.9 9.3 11.6 L9.8 13.6 L17.6 5.6 Q19.2 4.3 20.1 5.4 Q20.6 6.4 19.6 7.6 L9.6 18.3 Q8.2 19.6 6.8 18.9 Q5.9 18.3 5.6 16.8 Z" fill="#000"/></svg>
<div class="r" style="left:1567.5px;top:1154.2px;width:43px;height:24.6px;border-radius:12.3px;background:#6c6c6c;"></div>
<div class="r" style="left:1566.5px;top:1154.1px;width:24.8px;height:24.8px;border-radius:50%;background:#fff;box-shadow:0 2px 4px rgba(0,0,0,.45);"></div>
<svg class="s" style="left:1566.5px;top:1154.1px;" width="25" height="25" viewBox="0 0 25 25"><path d="M7.0 7.0 L17.8 17.8 M17.8 7.0 L7.0 17.8" stroke="#000" stroke-width="2.2"/></svg>
<div class="r" style="left:1648.5px;top:1154.2px;width:43px;height:24.6px;border-radius:12.3px;background:#6c6c6c;"></div>
<div class="r" style="left:1647.5px;top:1154.1px;width:24.8px;height:24.8px;border-radius:50%;background:#fff;box-shadow:0 2px 4px rgba(0,0,0,.45);"></div>
<svg class="s" style="left:1647.5px;top:1154.1px;" width="25" height="25" viewBox="0 0 25 25"><path d="M7.0 7.0 L17.8 17.8 M17.8 7.0 L7.0 17.8" stroke="#000" stroke-width="2.2"/></svg>
<div class="t" style="left:1732.50px;top:1164.89px;font-size:20.30px;line-height:24.36px;color:#ffffff;transform:scaleX(0.883);transform-origin:left center;-webkit-text-stroke:0.3px #ffffff;">STRING</div>
<svg class="s" style="left:1862.5px;top:1172.8px;" width="14" height="8.5" viewBox="0 0 14 8.5"><path d="M1 1 L13 1 L7.0 7.5 Z" fill="#fff"/></svg>
<div class="r" style="left:1732px;top:1196.0px;width:152px;height:2px;background:#a9a9a9;"></div>
<div class="r" style="left:1908.5px;top:1196.0px;width:45.5px;height:2px;background:#a9a9a9;"></div>
<div class="r" style="left:1978px;top:1196.0px;width:87px;height:2px;background:#a9a9a9;"></div>
<div class="r" style="left:2089px;top:1147.5px;width:101.5px;height:38px;border-radius:19.0px;border:3px solid #1fd5ee;box-sizing:border-box;box-shadow:0 1px 3px rgba(0,0,0,.35);"></div>
<div class="t" style="left:2104.10px;top:1158.21px;font-size:15.10px;line-height:18.12px;color:#ffffff;transform:scaleX(0.9862);transform-origin:left center;-webkit-text-stroke:0.3px #ffffff;">Action</div>
<svg class="s" style="left:2154px;top:1160.7px;" width="14" height="8.5" viewBox="0 0 14 8.5"><path d="M1 1 L13 1 L7.0 7.5 Z" fill="#fff"/></svg>
<div class="r" style="left:2214px;top:1133.0px;width:43.6px;height:31px;border-radius:15.5px;border:3px solid #1fd5ee;box-sizing:border-box;box-shadow:0 1px 3px rgba(0,0,0,.35);"></div>
<div class="r" style="left:2214px;top:1170.0px;width:43.6px;height:31px;border-radius:15.5px;border:3px solid #1fd5ee;box-sizing:border-box;box-shadow:0 1px 3px rgba(0,0,0,.35);"></div>
<svg class="s" style="left:2228px;top:1140.5px;" width="16" height="11" viewBox="0 0 16 11"><path d="M1.2 9.6 L8 2.6 L14.8 9.6" fill="none" stroke="#fff" stroke-width="2.7"/></svg>
<svg class="s" style="left:2228px;top:1179.0px;" width="16" height="11" viewBox="0 0 16 11"><path d="M1.2 1.4 L8 8.4 L14.8 1.4" fill="none" stroke="#fff" stroke-width="2.7"/></svg>
<div class="t" style="left:1802.70px;top:1249.71px;font-size:15.10px;line-height:18.12px;color:#b3b3b3;transform:scaleX(0.9397);transform-origin:left center;-webkit-text-stroke:0.3px #b3b3b3;">Rows per page:</div>
<div class="t" style="left:1944.00px;top:1249.80px;font-size:15.00px;line-height:18.0px;color:#ffffff;transform:scaleX(0.95);transform-origin:left center;-webkit-text-stroke:0.3px #ffffff;">10</div>
<svg class="s" style="left:1978px;top:1254.3px;" width="14.5" height="8.8" viewBox="0 0 14.5 8.8"><path d="M1 1 L13.5 1 L7.25 7.8 Z" fill="#fff"/></svg>
<div class="t" style="left:2046.50px;top:1249.71px;font-size:15.10px;line-height:18.12px;color:#b3b3b3;transform:scaleX(0.9475);transform-origin:left center;-webkit-text-stroke:0.3px #b3b3b3;">1-9 of 9</div>
<svg class="s" style="left:2158px;top:1247px;" width="16" height="19" viewBox="0 0 16 19"><path d="M12 2.5 L5 9.5 L12 16.5" fill="none" stroke="#5e5e5e" stroke-width="2.2"/></svg>
<svg class="s" style="left:2230px;top:1247px;" width="16" height="19" viewBox="0 0 16 19"><path d="M4 2.5 L11 9.5 L4 16.5" fill="none" stroke="#8a8a8a" stroke-width="2.2"/></svg>
</body></html>
